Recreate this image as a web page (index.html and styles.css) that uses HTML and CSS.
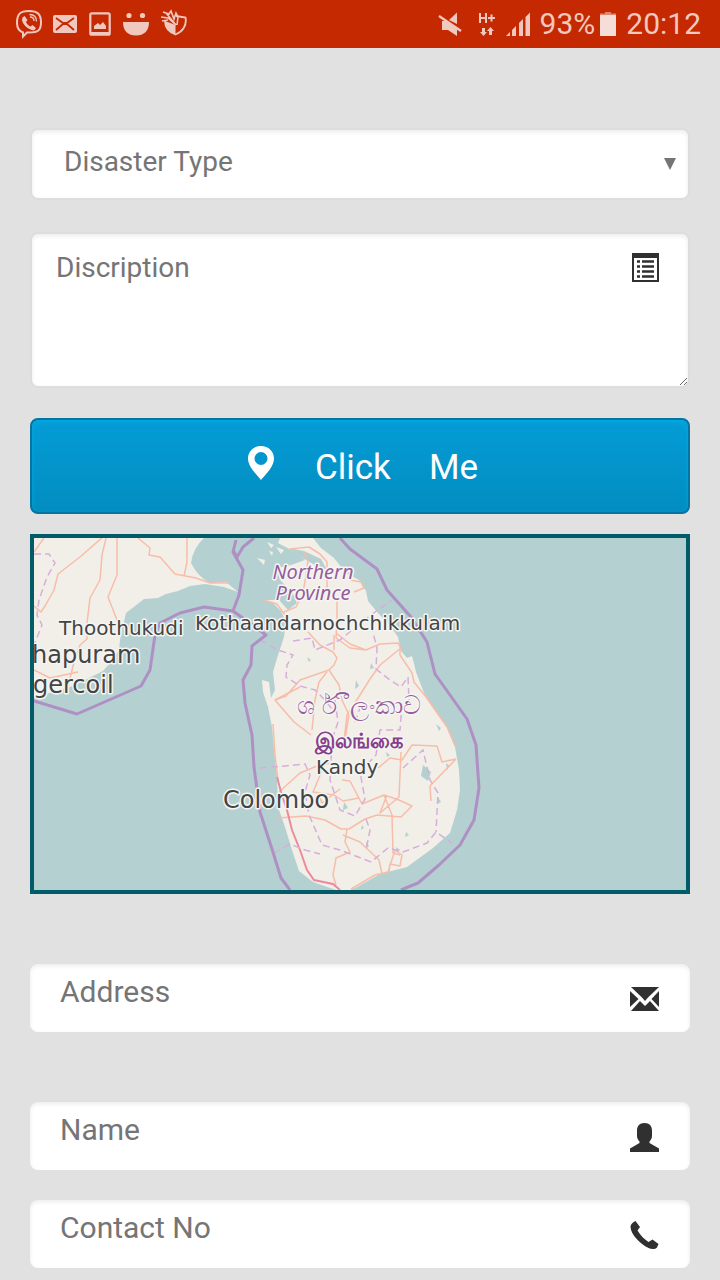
FILE: index.html
```html
<!DOCTYPE html>
<html lang="en">
<head>
<meta charset="utf-8">
<meta name="viewport" content="width=device-width, initial-scale=1">
<title>Disaster Report</title>
<link rel="stylesheet" href="styles.css">
</head>
<body>
<header class="status">
  <div class="status-group notices">
    <svg width="28" height="30" viewBox="0 0 28 30" aria-hidden="true"><path d="M14 2C5 2 2 5 2 14c0 5 2 8 6 9.500v4l4-4h2c9 0 12-2 12-10S23 2 14 2z" fill="none" stroke="currentColor" stroke-width="2"/><path d="M7.500 8.500l2-1.500 3 4-1.500 2c1 2 2.500 3.500 4.500 4.500l2-1.500 3.500 3-1.500 2c-1 1-3 0-5-1-4-2-7-5.500-7.500-9z" fill="currentColor"/><path d="M14.500 5.500c5 0 7 3 7 7M15 8c3 0 4 2 4 4" fill="none" stroke="currentColor" stroke-width="1.300"/></svg>
    <svg width="24" height="30" viewBox="0 0 24 30" aria-hidden="true"><rect x="0" y="6" width="24" height="18" rx="2" fill="currentColor"/><path d="M3 9l7 5h4l7-5M3 21l7-6h4l7 6" fill="none" stroke="#c42902" stroke-width="1.800"/></svg>
    <svg width="22" height="30" viewBox="0 0 22 30" aria-hidden="true"><rect x="1.300" y="4.300" width="19.400" height="21.400" rx="1.500" fill="none" stroke="currentColor" stroke-width="2.200"/><path d="M1 23h20v3H1zM5 20v-3l4-3 2 2 3-3 3 4v3z" fill="currentColor"/></svg>
    <svg width="26" height="30" viewBox="0 0 26 30" aria-hidden="true"><circle cx="6" cy="6.500" r="2.600" fill="currentColor"/><circle cx="19.500" cy="6.500" r="2.600" fill="currentColor"/><path d="M0 13h26c0 9-5 13.500-13 13.500S0 22 0 13z" fill="currentColor"/></svg>
    <svg width="26" height="30" viewBox="0 0 26 30" aria-hidden="true"><path d="M15 7l9.500 1.500c1.500 8-3 14.500-10 17C8 23 4 18 4 12" fill="none" stroke="currentColor" stroke-width="1.800"/><path d="M4 12l10.500 4v9C8 23 4 18 4 12z" fill="currentColor"/><path d="M2 3l6 2 2-3 3 8 2-6 2 4-1 8M0 8l7 1 8 7M1 12l6-1M5 4l10 12" fill="none" stroke="currentColor" stroke-width="1.600"/></svg>
  </div>
  <div class="status-group system">
    <svg class="mute" width="26" height="30" viewBox="0 0 26 30" aria-hidden="true"><path d="M11 11l8-7.500V15zM4 12h4l11 8v7l-9-6H4z" fill="currentColor"/><path d="M1 7l22 15" stroke="currentColor" stroke-width="2.400"/></svg>
    <svg class="data" width="18" height="30" viewBox="0 0 18 30" aria-hidden="true"><path d="M2 4v10M8 4v10M2 9h6M10 9h7M13.500 5.500v7" fill="none" stroke="currentColor" stroke-width="2"/><path d="M4 19h3v4h2l-3.500 4L2 23h2zM11 26v-4H9l3.500-4 3.500 4h-2v4z" fill="currentColor"/></svg>
    <svg class="signal" width="24" height="30" viewBox="0 0 24 30" aria-hidden="true"><path d="M0 27l4-4v4zM6 27v-6l4-4v10zM13 27V14l4-4v17zM19.500 27V8L24 3.500V27z" fill="currentColor"/></svg>
    <span class="battery-text">93%</span>
    <svg class="battery" width="16" height="30" viewBox="0 0 16 30" aria-hidden="true"><path d="M0 6h16v21H0z" fill="#f6ded8"/><path d="M0 4.500h5V3h6v1.500h5V6H0z" fill="currentColor" opacity=".6"/></svg>
    <span>20:12</span>
  </div>
</header>
<main>
<form class="report">
  <div class="field framed">
    <select class="control type" aria-label="Disaster Type"><option>Disaster Type</option></select>
    <svg class="arrow" width="12" height="12" viewBox="0 0 12 12" aria-hidden="true"><path d="M0 0h12L6 12z" fill="#757575"/></svg>
  </div>
  <div class="field framed description">
    <textarea class="control notes" aria-label="Discription" placeholder="Discription"></textarea>
    <svg class="icon list" width="30" height="30" viewBox="0 0 30 30" aria-hidden="true"><path d="M2 1h27v29H2zM4 6v22h23V6z" fill="#303030" fill-rule="evenodd"/><path d="M7 9.500h3M12 9.500h12M7 14.500h3M12 14.500h12M7 19.500h3M12 19.500h12M7 24.500h3M12 24.500h12" stroke="#303030" stroke-width="2.400"/></svg>
  </div>
  <button class="locate" type="button">
    <svg width="26" height="36" viewBox="0 0 26 36" aria-hidden="true"><path d="M13 0C5.500 0 0 5.500 0 12.500 0 20 7 27 13 34c6-7 13-14 13-21.500C26 5.500 20.500 0 13 0zm0 6a6.500 6.500 0 1 1 0 13 6.500 6.500 0 0 1 0-13z" fill="#fff" fill-rule="evenodd"/></svg>
    <span class="words"><span>Click</span> <span>Me</span></span>
  </button>
  <div class="map">
    <svg class="map-art" viewBox="34 538 652 352" preserveAspectRatio="xMidYMid slice" role="img" aria-label="Map of Sri Lanka">
      <path class="land" d="M34 538H204Q193 548 191 563Q198 577 210 583L226 582L238 592L224 587L205 584L190 586L178 591L166 594L158 598L144 599L135 606L126 613L123 626L120 640L119 650L110 663L103 671L85 680L70 687L53 692L34 697z"/>
      <path class="land" d="M313 538L321 548L334 558L346 573L359 580L366 591L368 601L378 613L389 624L398 637L401 651L407 658L412 656L416 672L424 693L433 707L447 727L455 747L459 770L460 790L457 810L450 833L433 848L407 867L380 874L357 887L350 890H336L313 882L299 871L292 850L285 827L278 807L277 777L274 750L272 727L268 707L263 692L262 680L269 682L271 698L275 690L273 672L278 655L284 637L286 622L281 611L273 603L264 600L279 600L288 610L297 603L292 592L280 580L277 568L291 565L305 560L295 552L278 543L280 538z"/>
      <path class="land" d="M257 558l8 2-1 5zM267 542l7 3-3 3zM276 547l8 3-3 4zM269 551l4 1-1 4z"/>
      <g class="water">
        <path d="M289 548l15 3 17 8 6 11-14-6-12-7zM423 765l8 7-3 9-7-5zM406 832l3 3-4 2zM366 842l3 4-3 3zM396 847l4 3-3 3zM371 663l3 5-4 1zM307 657l4 3-2 2zM356 680l3 6-4 3zM436 724l5 4-2 3zM446 763l4 3-3 4zM438 797l3 5-4 2zM386 752l4 3-3 2zM344 802l4 6-5 2zM362 825l2 3-3 2z"/>
      </g>
      <g class="road">
        <path d="M44 538L34 552M104 536L80 557L58 574L54 590L45 606L41 612L34 606M106 538L102 555L100 580L90 598L87 623L87 639L80 645L74 662L67 690M117 538L117 575L108 597L117 620L128 635M138 538L150 548L149 555L160 557L175 574L196 578L210 583L228 583M187 538L187 562L184 576M34 670L50 678L78 672"/>
        <path d="M290 549L309 547L320 554L327 562L327 592M303 551L308 560L306 575L303 593L296 607L284 612M264 600L277 604L285 615M350 580L361 582L364 588L354 592M337 600L337 621L336 638L350 648L366 650L380 644L398 643L401 648L380 665L370 679L360 695L347 715L344 741M308 632L320 645L333 652L337 658L334 665L329 670L300 680L286 696L275 700L294 722L311 735M327 672L319 682L315 700L312 730M329 670L339 685L342 700L349 715L345 740M334 635L334 650M336 633L350 644L366 650M400 647L400 655L412 673L414 682L426 697L433 707L447 727L456 748"/>
        <path d="M275 700L300 687M273 724L275 755L278 780M279 792L300 773L322 764L338 763M278 818L306 816L325 820L341 829L349 829L365 819L377 815L401 817L412 806L399 800L384 795L362 804L350 781L342 780M324 766L313 792L334 795L343 801L359 798M378 768L390 758L402 760L412 745L437 746L442 762L456 759M401 752L399 797L380 813L387 795M384 795L392 815L393 853L400 855M347 829L345 842L350 852L336 858L333 875L336 885M343 835L360 842L379 860L382 874M351 889L375 875L388 872L395 850L402 855L400 866L390 864L389 872M456 759L430 786L431 801M318 792L322 803L340 789"/>
      </g>
      <path class="highway" d="M277 777L281 792L287 810L292 830L300 850L307 870L314 880L333 884L340 890"/>
      <g class="district">
        <path d="M34 554H49L55 563L47 577L39 600L37 615L42 625L34 645M260 640L278 650L293 655L287 665L286 677L300 686L315 690L325 700L335 713M293 641L312 638L315 650L340 640L352 630L375 612L392 600M371 625L377 648L376 669L390 680L401 687L408 677L409 700M260 768L285 766L305 764L310 775L305 792L309 815L322 845L340 850L371 862L388 848L403 852L427 843L436 832L452 843M335 700L338 722L332 740L330 780L340 810L355 816L365 799L360 772L376 755L380 730L400 730L402 705M274 853L290 844L305 850L320 854M403 768L423 750L430 780L438 793L436 832M355 722L361 705M366 819L370 830L366 850"/>
      </g>
      <g class="border">
        <path d="M34 701L77 714L141 686L150 670L155 635L160 623L180 613L204 607L233 611L239 595L243 570L233 552L236 540M254 538L243 547L237 557L233 550M233 611L254 626L266 635L252 646L251 665L243 680L245 703L252 735L254 767L260 812L272 849L281 878L290 890M340 538L350 549L377 569L387 590L411 617L427 642L435 674L450 695L467 719L476 745L479 788L474 820L460 845L439 865L418 883L401 890"/>
      </g>
      <g class="label">
        <text x="59" y="635" font-size="20">Thoothukudi</text>
        <text x="195" y="630" font-size="20">Kothaandarnochchikkulam</text>
        <text x="32" y="663" font-size="24">hapuram</text>
        <text x="33" y="693" font-size="24">gercoil</text>
        <text x="316" y="774" font-size="20">Kandy</text>
        <text x="223" y="808" font-size="24">Colombo</text>
      </g>
      <g class="label region" text-anchor="middle">
        <text class="province" x="313" y="579" font-size="20">Northern</text>
        <text class="province" x="313" y="600" font-size="20">Province</text>
        <text x="359" y="714" font-size="25">ශ ර් ීලංකාව</text>
        <text class="tamil" x="359" y="748" font-size="21">இலங்கை</text>
      </g>
    </svg>
  </div>
  <div class="field plain">
    <input class="control" type="text" aria-label="Address" placeholder="Address">
    <svg class="icon" width="30" height="30" viewBox="0 0 30 30" aria-hidden="true"><path d="M1 3h28L18 13.500l-3 3.500-3-3.500zM0 7l8.500 8L0 23zM29 7v16l-7.500-8zM1 27l9-10 5 5 5-5 9 10z" fill="#303030"/></svg>
  </div>
  <div class="field plain">
    <input class="control" type="text" aria-label="Name" placeholder="Name">
    <svg class="icon" width="30" height="30" viewBox="0 0 30 30" aria-hidden="true"><path d="M14.500 1c5 0 7.500 3 7.500 7.500V14c0 2-1 4-2.500 5.500V21l9.500 5.500V30H0v-3.500L9.500 21v-1.500C8 18 7 16 7 14V8.500C7 4 9.500 1 14.500 1z" fill="#303030"/></svg>
  </div>
  <div class="field plain contact">
    <input class="control" type="tel" aria-label="Contact No" placeholder="Contact No">
    <svg class="icon" width="30" height="30" viewBox="0 0 30 30" aria-hidden="true"><path d="M5.500 1l4.500 6-2.500 3.500c3 5 7 9 11 11.500l4-2.500 6 4.500-1.500 3.500c-2 2-5.500 2-8.500.5C10 24 1 14.500.5 7c0-2.500 2.500-5 5-6z" fill="#303030"/></svg>
  </div>
</form>
</main>
</body>
</html>
```

FILE: styles.css
```css
* { box-sizing: border-box; }

body {
  margin: 0;
  background: #e1e1e1;
  font-family: Roboto, "Noto Sans", sans-serif;
}

.status {
  display: flex;
  justify-content: space-between;
  height: 48px;
  padding: 0 19px 0 15px;
  background: #c42902;
  color: #f0c8be;
  font-size: 30px;
  line-height: 48px;
}

.status-group { display: flex; align-items: center; }
.notices { gap: 12px; }
.notices svg:first-child { margin-right: -2px; }
.system { gap: 8px; }
.mute { margin-right: 6px; }
.data { margin-right: 2px; }
.signal { margin-right: 2px; }
.battery { margin: 0 2px 0 -3px; }
.status svg { flex: none; }

.report {
  display: flex;
  flex-direction: column;
  padding: 80px 30px 12px;
}

.field { position: relative; display: flex; }

.control {
  display: block;
  width: 100%;
  margin: 0;
  border: 0;
  border-radius: 8px;
  outline: 0;
  background: #fff;
  box-shadow: inset 0 2px 4px rgba(0, 0, 0, 0.08);
  color: #757575;
  font: 30px/36px Roboto, "Noto Sans", sans-serif;
}

.control::placeholder { color: #757575; opacity: 1; }

.framed .control {
  border: 2px solid #dddddd;
  font-size: 28px;
}

.type {
  height: 72px;
  padding: 0 32px 4px;
  appearance: none;
}

.arrow { position: absolute; right: 14px; top: 30px; }

.description { margin-top: 32px; }

.notes {
  height: 156px;
  padding: 16px 60px 16px 24px;
  resize: vertical;
}

.icon { position: absolute; right: 30px; top: 20px; }

.locate {
  display: flex;
  align-items: center;
  justify-content: center;
  gap: 41px;
  height: 96px;
  margin: 30px 0 20px;
  padding: 0 0 0 6px;
  border: 2px solid #0474a0;
  border-radius: 8px;
  background: linear-gradient(#049cd6, #028dc0);
  box-shadow: inset 0 2px 5px rgba(0, 180, 240, 0.6);
  color: #fff;
  font: 35px/42px Roboto, "Noto Sans", sans-serif;
}

.locate svg { margin-bottom: 4px; }
.words { display: flex; gap: 38px; padding-top: 4px; }

.map {
  height: 360px;
  overflow: hidden;
  border: 4px solid #005c69;
  background: #b5d0d0;
}

.map-art { display: block; width: 100%; height: 100%; }
.land { fill: #f2efe9; }
.water { fill: #b5d0d0; }
.road { fill: none; stroke: #f8bda9; stroke-width: 1.5; stroke-linejoin: round; }
.highway { fill: none; stroke: #ea8c9e; stroke-width: 2; }
.district { fill: none; stroke: #d7aedb; stroke-width: 1.5; stroke-dasharray: 7 4; }
.border { fill: none; stroke: #ae90c5; stroke-width: 3; stroke-linejoin: round; }

.label {
  fill: #444;
  stroke: #f5f5f2;
  stroke-width: 3px;
  stroke-linejoin: round;
  paint-order: stroke;
  font-family: "DejaVu Sans", "Noto Sans", sans-serif;
}

.region { fill: #965d9b; }
.province { font-family: "Noto Sans", sans-serif; font-style: italic; }
.tamil { font-weight: bold; fill: #873f8b; }

.plain { margin-top: 70px; }
.plain .control { height: 68px; padding: 0 70px 14px 30px; }
.contact { margin-top: 30px; }
```
